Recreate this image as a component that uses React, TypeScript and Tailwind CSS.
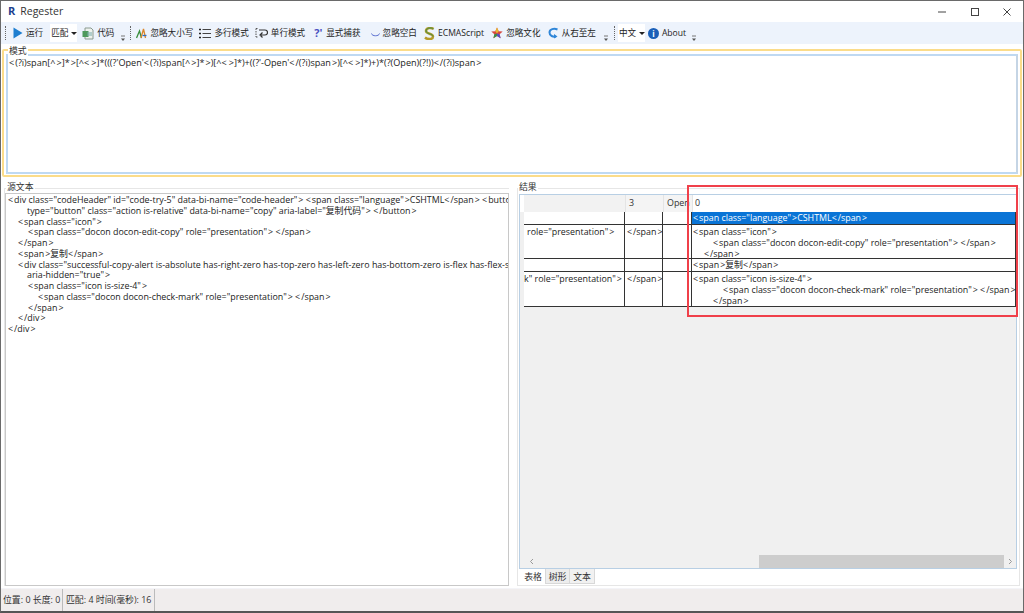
import React from "react";

const font = { fontFamily: '"Open Sans","Noto Sans CJK SC",sans-serif' };

function T({ s }: { s: string }) {
  return (
    <>
      {s.split(/([<>])/).map((p, i) =>
        p === "<" ? (
          <span key={i} className="pr-[1px]">{p}</span>
        ) : p === ">" ? (
          <span key={i} className="pl-[1px]">{p}</span>
        ) : (
          <React.Fragment key={i}>{p}</React.Fragment>
        )
      )}
    </>
  );
}

function More({ className }: { className: string }) {
  return (
    <svg width="6" height="7" viewBox="0 0 6 7" className={`shrink-0 ${className}`}>
      <path d="M1 1h4" stroke="#777" strokeWidth="1" />
      <path d="M1 3.500h4L3 6z" fill="#555" />
    </svg>
  );
}
function Grip({ className }: { className: string }) {
  return <span className={`shrink-0 w-px h-[14px] border-l border-dotted border-[#666] ${className}`} />;
}
function Caret() {
  return <span className="ml-[3px] shrink-0 w-0 h-0 border-x-[3px] border-x-transparent border-t-[3px] border-t-[#222]" />;
}
function Tool({ icon, label, className }: { icon: React.ReactNode; label: string; className: string }) {
  return (
    <div className={`flex shrink-0 items-center ${className}`}>
      {icon}
      <span className="ml-[3px] whitespace-nowrap">{label}</span>
    </div>
  );
}

const sourceLines: [string, string][] = [
  ["pl-[2px]", `<div class="codeHeader" id="code-try-5" data-bi-name="code-header"> <span class="language">CSHTML</span> <button`],
  ["pl-[21px]", `type="button" class="action is-relative" data-bi-name="copy" aria-label="复制代码"> </button>`],
  ["pl-[12px]", `<span class="icon">`],
  ["pl-[22px]", `<span class="docon docon-edit-copy" role="presentation"> </span>`],
  ["pl-[12px]", `</span>`],
  ["pl-[12px]", `<span>复制</span>`],
  ["pl-[12px]", `<div class="successful-copy-alert is-absolute has-right-zero has-top-zero has-left-zero has-bottom-zero is-flex has-flex-shrink`],
  ["pl-[21px]", `aria-hidden="true">`],
  ["pl-[22px]", `<span class="icon is-size-4">`],
  ["pl-[32px]", `<span class="docon docon-check-mark" role="presentation"> </span>`],
  ["pl-[22px]", `</span>`],
  ["pl-[12px]", `</div>`],
  ["pl-[2px]", `</div>`],
];

function Cell({ className, children }: { className: string; children?: React.ReactNode }) {
  return <div className={`overflow-hidden whitespace-nowrap border-b border-r border-[#333] ${className}`}>{children}</div>;
}

export default function App() {
  return (
    <div
      style={font}
      className="w-[1024px] h-[613px] flex flex-col overflow-hidden bg-white text-[8.9px] leading-[10.75px] text-[#222] border-l border-r border-t border-[#6a6a6a] border-b-2 border-b-[#555]"
    >
      {/* title bar */}
      <div className="h-[21px] shrink-0 flex items-center bg-white">
        <span className="ml-[7px] text-[11px] font-bold text-[#1d3f8f]">R</span>
        <span className="ml-[5px] text-[10.5px] text-[#333]">Regester</span>
        <div className="ml-auto flex items-center mr-[11px]">
          <svg width="10" height="10" viewBox="0 0 10 10"><path d="M1 5h8" stroke="#444" /></svg>
          <svg width="10" height="10" viewBox="0 0 10 10" className="ml-[23px]"><rect x="1.500" y="1.500" width="7" height="7" fill="none" stroke="#444" /></svg>
          <svg width="10" height="10" viewBox="0 0 10 10" className="ml-[22px]"><path d="M1.500 1.500l7 7M8.500 1.500l-7 7" stroke="#444" /></svg>
        </div>
      </div>

      {/* toolbar */}
      <div className="h-[22px] shrink-0 flex items-center bg-[#edf3fc] text-[#222] text-[8.6px]">
        <Grip className="ml-[4px]" />
        <Tool
          className="ml-[7px]"
          label="运行"
          icon={<svg width="10" height="12" viewBox="0 0 10 12"><path d="M0.500 0.500L9.500 6L0.500 11.500z" fill="#1f7fd0" /></svg>}
        />
        <div className="ml-[7px] w-[27px] h-[18px] shrink-0 whitespace-nowrap bg-white flex items-center pl-[1px]">匹配<Caret /></div>
        <Tool
          className="ml-[5px]"
          label="代码"
          icon={
            <svg width="12" height="13" viewBox="0 0 12 13">
              <path d="M3 1h6l2 2v9H3z" fill="#eef2ee" stroke="#8a9a90" />
              <rect x="0.500" y="4" width="6" height="6" fill="#4f9a5c" />
              <path d="M5 6h5M5 8h5" stroke="#7aa" />
            </svg>
          }
        />
        <More className="ml-[6px] mt-[10px]" />
        <Grip className="ml-[4px]" />
        <Tool
          className="ml-[5px]"
          label="忽略大小写"
          icon={
            <svg width="11" height="12" viewBox="0 0 11 12">
              <path d="M0.500 11L3.500 4L5.500 11" fill="none" stroke="#3b8f3f" strokeWidth="1.300" />
              <path d="M5 11L7.500 2L9.500 11" fill="none" stroke="#d9862b" strokeWidth="1.300" />
              <path d="M6.500 8.500h4" stroke="#2f6fc0" strokeWidth="1.300" />
            </svg>
          }
        />
        <Tool
          className="ml-[6px]"
          label="多行模式"
          icon={
            <svg width="12" height="11" viewBox="0 0 12 11">
              <path d="M0 1.500h2M0 5.500h2M0 9.500h2" stroke="#222" strokeWidth="1.500" />
              <path d="M3.500 1.500h8.500M3.500 5.500h8.500M3.500 9.500h8.500" stroke="#444" strokeWidth="1.200" />
            </svg>
          }
        />
        <Tool
          className="ml-[6px]"
          label="单行模式"
          icon={
            <svg width="13" height="12" viewBox="0 0 13 12">
              <path d="M1 1.500h2M1 10h2M1 1.500v8.500" stroke="#555" strokeDasharray="1.500 1" fill="none" />
              <path d="M4 3h6a2 2 0 0 1 0 5H6M7.500 5.500L5 8l2.500 2.500" stroke="#333" strokeWidth="1.200" fill="none" />
            </svg>
          }
        />
        <Tool
          className="ml-[9px]"
          label="显式捕获"
          icon={<span className="w-[9px] text-[11px] font-bold text-[#4a4fc0]">?&#39;</span>}
        />
        <Tool
          className="ml-[10px]"
          label="忽略空白"
          icon={
            <svg width="9" height="6" viewBox="0 0 9 6" className="mt-[4px]">
              <path d="M0.500 1.500C1 4.500 8 4.500 8.500 1.500" stroke="#5a6fd0" fill="none" />
            </svg>
          }
        />
        <Tool
          className="ml-[7px]"
          label="ECMAScript"
          icon={
            <svg width="11" height="13" viewBox="0 0 11 13">
              <path d="M9.500 2C7 0 2 1 2 4s7 2.500 7 5.500S4 13 1 10.500" fill="none" stroke="#b59a2a" strokeWidth="2.500" />
              <path d="M9.500 2C7 0 2 1 2 4s7 2.500 7 5.500" fill="none" stroke="#3f8f4a" strokeWidth="1" />
            </svg>
          }
        />
        <Tool
          className="ml-[7px]"
          label="忽略文化"
          icon={
            <svg width="12" height="12" viewBox="0 0 12 12">
              <path d="M6 0.500L7.700 4.300L11.700 4.600L8.600 7.200L9.600 11.300L6 9L2.400 11.300L3.400 7.200L0.300 4.600L4.300 4.300z" fill="#d8483f" />
              <path d="M6 0.500L7.700 4.300L6 6.500L4.300 4.300z" fill="#e8b52e" />
              <path d="M2.400 11.300L3.400 7.200L6 6.500L6 9z" fill="#3a8f4a" />
              <path d="M9.600 11.300L8.600 7.200L6 6.500L6 9z" fill="#5a4fc0" />
            </svg>
          }
        />
        <Tool
          className="ml-[7px]"
          label="从右至左"
          icon={
            <svg width="11" height="12" viewBox="0 0 11 12">
              <path d="M9.500 2.500C6 1 1.500 2 1.500 5.500S5 10 8 9.500" fill="none" stroke="#2f86d8" strokeWidth="2" />
              <path d="M6 7l3.500 2.500L6 11.500z" fill="#2f86d8" />
            </svg>
          }
        />
        <More className="ml-[7px] mt-[10px]" />
        <Grip className="ml-[5px]" />
        <div className="ml-[3px] w-[27px] h-[18px] shrink-0 whitespace-nowrap bg-white flex items-center pl-[1px]">中文<Caret /></div>
        <Tool
          className="ml-[3px]"
          label="About"
          icon={
            <span className="w-[11px] h-[11px] rounded-full bg-[#1a5fb8] text-white text-[8px] leading-[11px] text-center font-bold">i</span>
          }
        />
        <More className="ml-[5px] mt-[10px]" />
      </div>

      {/* mode */}
      <div className="relative mt-[5px] mx-[1px] h-[128px] shrink-0 border-2 border-[#fbdc8a] rounded-[2px]">
        <span className="absolute left-[4px] top-[-5px] bg-white px-[1px] text-[#333]">模式</span>
        <div className="mt-[3px] mx-[2px] h-[120px] border-2 border-[#bfd9f2] border-r-[#c5d5e5] pl-[1px] pt-[2px] whitespace-nowrap text-[9.1px]">
          <T s={`<(?i)span[^>]*>[^<>]*(((?'Open'<(?i)span[^>]*>)[^<>]*)+((?'-Open'</(?i)span>)[^<>]*)+)*(?(Open)(?!))</(?i)span>`} />
        </div>
      </div>

      {/* lower panes */}
      <div className="flex-1 flex min-h-0">
        {/* source */}
        <div className="relative w-[512px] shrink-0 pt-[11px] pl-[3px] pr-[4px] pb-[2px] flex">
          <span className="absolute left-[5px] top-[5px] bg-white px-[1px] text-[#333]">源文本</span>
          <div className="flex-1 min-w-0 flex flex-col border-t border-l border-[#e6e6e6] pt-[4px]">
            <div className="flex-1 border border-[#c8c8c8] pt-[1px] overflow-hidden whitespace-nowrap">
              {sourceLines.map(([pad, text], i) => (
                <div key={i} className={`${pad} h-[10.75px]`}><T s={text} /></div>
              ))}
            </div>
          </div>
        </div>

        {/* result */}
        <div className="relative flex-1 min-w-0 pt-[11px] pl-[4px] pr-[3px] pb-[2px] flex">
          <span className="absolute left-[5px] top-[5px] bg-white px-[1px] text-[#333]">结果</span>
          <div className="flex-1 min-w-0 flex flex-col border border-[#e6e6e6] pt-[5px] pl-[1px] pr-[2px]">
            <div className="h-[375px] shrink-0 border border-[#b8cfe4] bg-[#f0f0f0] flex flex-col overflow-hidden">
              <div className="grid grid-cols-[105px_38px_29px_1fr] h-[17px] shrink-0 bg-white text-[#333] leading-[16px]">
                <div className="bg-[#f2f2f2] ml-[4px]" />
                <div className="pl-[3px] bg-[#f4f4f4] border-l border-[#e4e4e4]">3</div>
                <div className="pl-[3px] bg-[#f4f4f4] border-l border-[#e4e4e4] overflow-hidden">Open</div>
                <div className="pl-[2px] bg-white border-l border-[#e4e4e4]">0</div>
              </div>
              <div className="grid grid-cols-[101px_38px_29px_1fr] grid-rows-[13px_34px_13px_35px] pl-[4px]">
                <Cell className="bg-white" />
                <Cell className="bg-white" />
                <Cell className="bg-white" />
                <Cell className="bg-[#0a74d6] text-white pl-[1px] pt-[1px]"><T s={`<span class="language">CSHTML</span>`} /></Cell>

                <Cell className="bg-white pl-[3px] pt-[2px]"><T s={`role="presentation">`} /></Cell>
                <Cell className="bg-white pl-[2px] pt-[2px]"><T s={`</span>`} /></Cell>
                <Cell className="bg-white" />
                <Cell className="bg-white pl-[1px] pt-[2px]">
                  <div><T s={`<span class="icon">`} /></div>
                  <div className="pl-[20px]"><T s={`<span class="docon docon-edit-copy" role="presentation"> </span>`} /></div>
                  <div className="pl-[11px]"><T s={`</span>`} /></div>
                </Cell>

                <Cell className="bg-white" />
                <Cell className="bg-white" />
                <Cell className="bg-white" />
                <Cell className="bg-white pl-[1px] pt-[1px]"><T s={`<span>复制</span>`} /></Cell>

                <Cell className="bg-white pt-[2px]"><T s={`k" role="presentation">`} /></Cell>
                <Cell className="bg-white pl-[2px] pt-[2px]"><T s={`</span>`} /></Cell>
                <Cell className="bg-white" />
                <Cell className="bg-white pl-[1px] pt-[2px]">
                  <div><T s={`<span class="icon is-size-4">`} /></div>
                  <div className="pl-[30px]"><T s={`<span class="docon docon-check-mark" role="presentation"> </span>`} /></div>
                  <div className="pl-[20px]"><T s={`</span>`} /></div>
                </Cell>
              </div>
              {/* horizontal scrollbar */}
              <div className="mt-auto h-[13px] shrink-0 flex items-center text-[#999]">
                <svg width="5" height="7" viewBox="0 0 5 7" className="ml-[9px]"><path d="M4 1L1.500 3.500L4 6" fill="none" stroke="#999" /></svg>
                <div className="ml-[225px] w-[245px] h-[13px] bg-[#cdcdcd]" />
                <svg width="5" height="7" viewBox="0 0 5 7" className="ml-[4px]"><path d="M1 1L3.500 3.500L1 6" fill="none" stroke="#999" /></svg>
              </div>
            </div>
            <div className="flex ml-[2px] h-[15px] leading-[15px] text-[#333]">
              <div className="w-[24px] text-center bg-white">表格</div>
              <div className="w-[25px] text-center bg-[#ededed] border border-[#d8d8d8] border-t-0">树形</div>
              <div className="w-[25px] text-center bg-[#f1f1f1] border-b border-r border-[#d8d8d8]">文本</div>
            </div>
          </div>
        </div>
      </div>

      {/* status */}
      <div className="h-[23px] shrink-0 flex items-stretch bg-[#f0eded] text-[#333] border-t border-[#f4f4f8] leading-[22px]">
        <div className="w-[62px] pl-[2px] border-r border-[#bbb] whitespace-nowrap">位置: 0 长度: 0</div>
        <div className="w-[92px] pl-[3px] border-r border-[#bbb] whitespace-nowrap">匹配: 4 时间(毫秒): 16</div>
      </div>

      {/* annotation */}
      <div className="absolute left-[687px] top-[185px] w-[331px] h-[132px] border-2 border-[#f0404a] pointer-events-none" />
    </div>
  );
}
